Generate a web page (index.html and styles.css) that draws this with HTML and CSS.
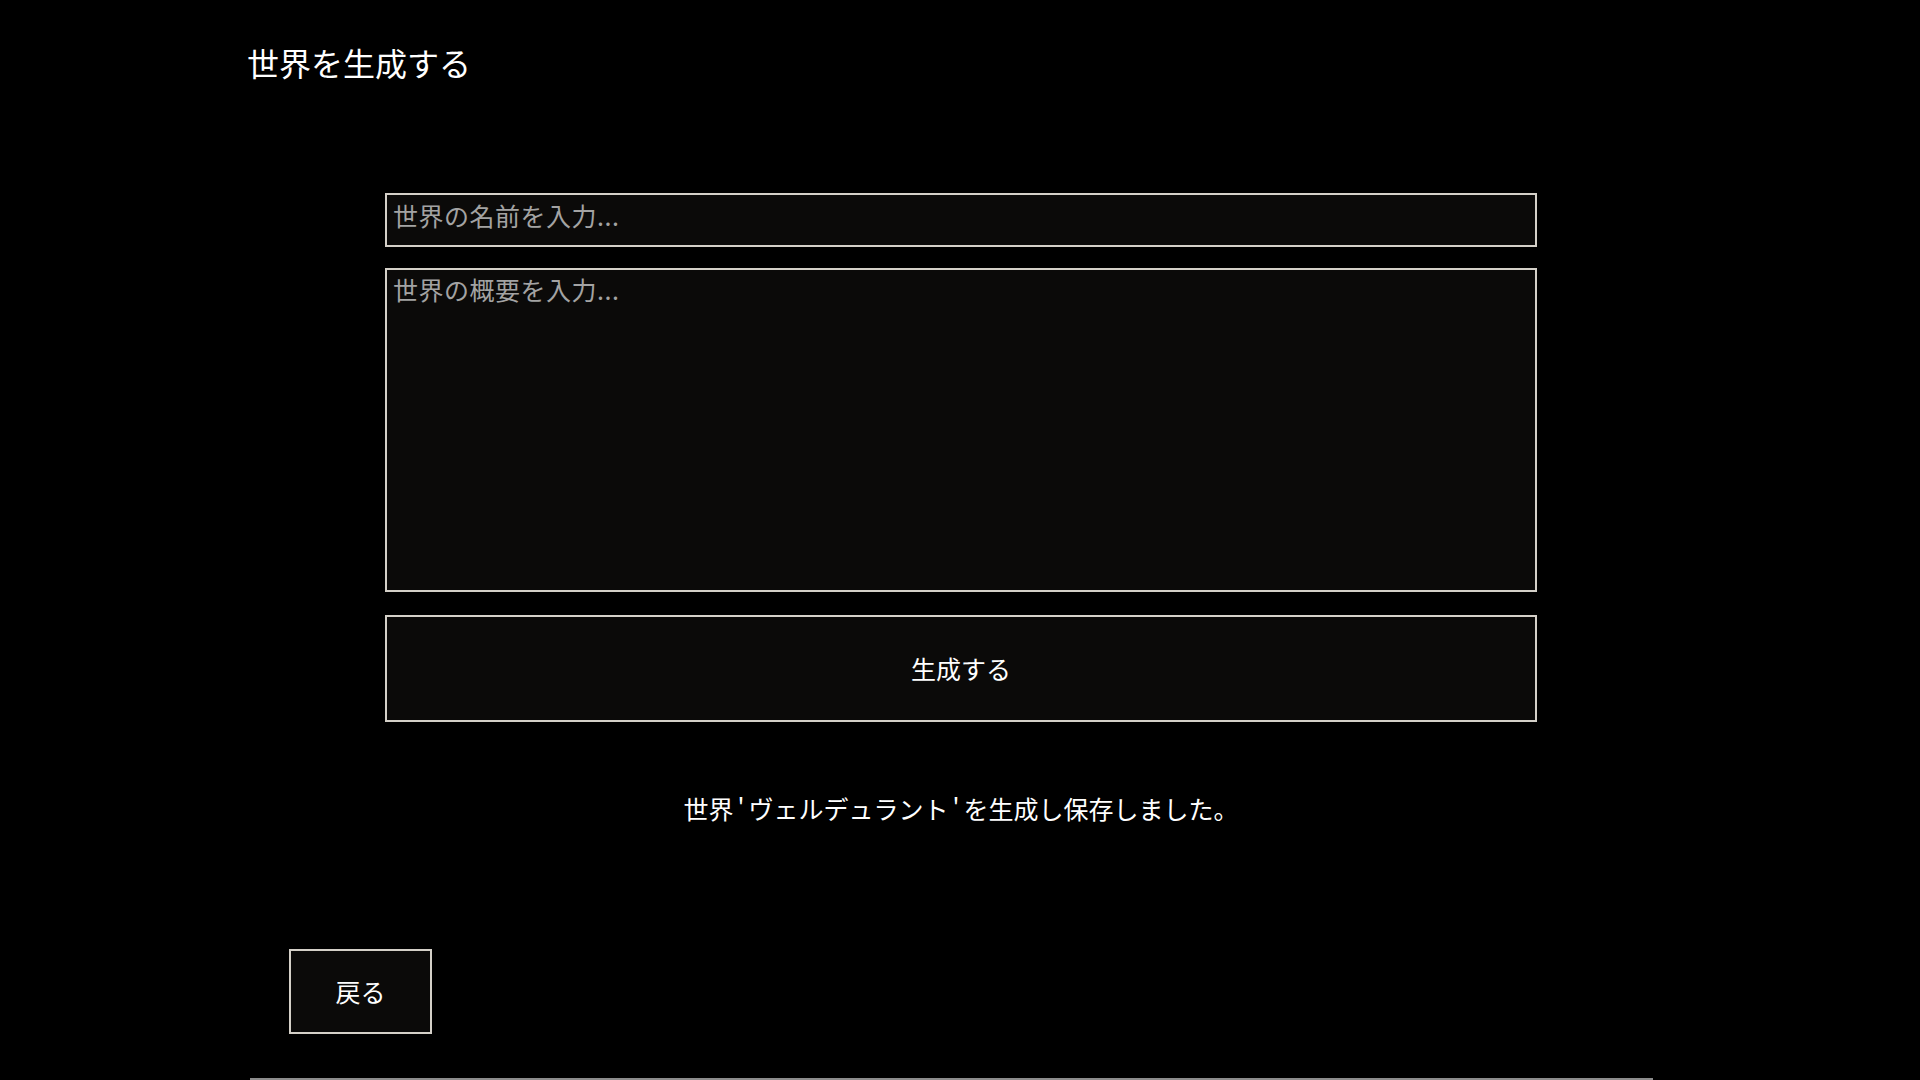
FILE: index.html
```html
<!DOCTYPE html>
<html lang="ja">
<head>
<meta charset="utf-8">
<title>世界を生成する</title>
<link rel="stylesheet" href="styles.css">
</head>
<body>
<div class="page">
  <h1 class="title">世界を生成する</h1>
  <main class="form">
    <input class="field name-field" type="text" placeholder="世界の名前を入力...">
    <textarea class="field desc-field" placeholder="世界の概要を入力..."></textarea>
    <button class="btn generate-btn" type="button">生成する</button>
    <p class="status">世界<span class="quote">'</span>ヴェルデュラント<span class="quote">'</span>を生成し保存しました。</p>
  </main>
  <div class="back-row">
    <button class="btn back-btn" type="button">戻る</button>
  </div>
  <div class="footer-peek"></div>
</div>
</body>
</html>
```

FILE: styles.css
```css
html, body {
  margin: 0;
  padding: 0;
  background: #000;
  height: 100%;
  overflow: hidden;
}

body {
  font-family: "Noto Sans CJK JP", "Noto Sans", sans-serif;
  color: #fff;
}

.page {
  display: flex;
  flex-direction: column;
  padding: 43px 0 0 247px;
  box-sizing: border-box;
  height: 1080px;
}

.title {
  margin: 0;
  font-size: 32px;
  line-height: 38px;
  font-weight: normal;
  color: #fff;
}

.form {
  display: flex;
  flex-direction: column;
  width: 1152px;
  margin: 112px 0 0 138px;
}

.field {
  display: block;
  box-sizing: border-box;
  width: 100%;
  background: #0b0a09;
  border: 2px solid #d4d0c8;
  color: #fff;
  font-family: "Noto Sans CJK JP", "Noto Sans", sans-serif;
  font-size: 25px;
  outline: none;
  border-radius: 0;
  margin: 0;
}

.field::placeholder {
  color: #a3a3a3;
  opacity: 1;
  letter-spacing: 0.5px;
}

.name-field {
  height: 54px;
  padding: 0 6px 11px;
}

.desc-field {
  height: 324px;
  margin-top: 21px;
  padding: 4px 6px;
  line-height: 1.2;
  resize: none;
}

.btn {
  box-sizing: border-box;
  background: #0b0a09;
  border: 2px solid #d4d0c8;
  color: #fff;
  font-family: "Noto Sans CJK JP", "Noto Sans", sans-serif;
  font-size: 25px;
  border-radius: 0;
  padding: 0 0 2px;
  cursor: pointer;
}

.generate-btn {
  width: 100%;
  height: 107px;
  margin-top: 23px;
}

.status {
  margin: 71px 0 0;
  font-size: 25px;
  line-height: 30px;
  text-align: center;
  color: #fff;
}

.quote {
  display: inline-block;
  margin: 0 4px;
}

.back-row {
  display: flex;
  margin: 126px 0 0 42px;
}

.back-btn {
  width: 143px;
  height: 85px;
}

.footer-peek {
  width: 1403px;
  height: 40px;
  margin: 44px 0 0 3px;
  border-top: 2px solid #8c8c8c;
  background: #1a1c20;
}
```
